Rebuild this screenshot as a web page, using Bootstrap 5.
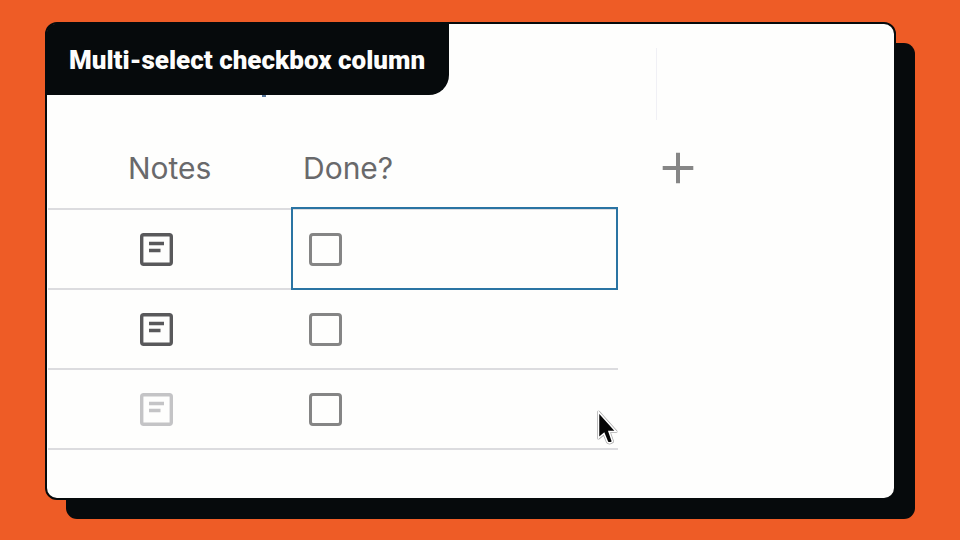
<!DOCTYPE html>
<html lang="en">
<head>
<meta charset="utf-8">
<meta name="viewport" content="width=device-width, initial-scale=1">
<title>Multi-select checkbox column</title>
<link href="https://cdn.jsdelivr.net/npm/bootstrap@5.3.0/dist/css/bootstrap.min.css" rel="stylesheet">
<style>
  body { background: #ee5c26; font-family: Inter, "Liberation Sans", sans-serif; padding: 22px 64px 40px 45px; }
  .demo-panel { background: #fefefd; border: 2px solid #060a0c; border-radius: 12px; box-shadow: 20px 20px 0 -1px #060a0c; }
  .demo-head { height: 104px; }
  .demo-title { background: #060a0c; color: #fdfdfc; font-family: Roboto, "Liberation Sans", sans-serif; font-size: 26px; line-height: 24px; font-weight: 900; padding: 24px 24px 23px 22px; border-radius: 8px 0 20px 0; }
  .demo-title::after { content: ""; position: absolute; left: 215px; top: 100%; width: 4px; height: 2px; background: #56769c; }
  .head-rule { width: 1px; height: 72px; margin: 24px 237px 0 auto; background: #f0f0f5; }
  .grid-table { width: 570px; margin-left: 1px; border-collapse: separate; border-spacing: 0; table-layout: fixed; }
  .grid-table th, .grid-table td { border-bottom: 2px solid #dcdcdf; padding: 0; vertical-align: middle; }
  .grid-table th { height: 82px; font-size: 30px; line-height: 36px; font-weight: 400; color: #69696b; }
  .grid-table td { height: 80px; }
  .col-notes { width: 243px; }
  .grid-table th.notes-cell { padding-left: 80px; }
  .grid-table td.notes-cell { padding-left: 92px; }
  .grid-table th.done-cell { padding-left: 12px; }
  .grid-table td.done-cell { padding-left: 18px; }
  .picked::after { content: ""; position: absolute; inset: -3px 0 -2px 0; border: 2px solid #2a74a3; pointer-events: none; }
  .note-btn { display: block; color: #59595b; background: none; border: 0; padding: 0; }
  .note-btn.empty { color: #c4c4c6; }
  .note-btn svg, .plus-btn svg { display: block; }
  .tick { appearance: none; display: block; width: 33px; height: 33px; margin: 0; border: 3px solid #858585; border-radius: 4px; background: #fefefd; }
  .tick:checked { background: #858585; }
  .plus-btn { color: #868686; background: none; border: 0; padding: 0; margin: 24px 0 0 44px; }
  .pointer { left: 550px; top: 386px; }
</style>
</head>
<body class="min-vh-100 d-flex">
<main class="demo-panel flex-fill d-flex flex-column position-relative">
  <header class="demo-head d-flex align-items-start">
    <h1 class="demo-title position-relative m-0 text-nowrap">Multi-select checkbox column</h1>
    <div class="head-rule"></div>
  </header>
  <div class="d-flex align-items-start">
    <table class="grid-table">
      <colgroup><col class="col-notes"><col></colgroup>
      <thead><tr><th scope="col" class="notes-cell">Notes</th><th scope="col" class="done-cell">Done?</th></tr></thead>
      <tbody>
        <tr>
          <td class="notes-cell"><button type="button" class="note-btn" aria-label="Open note 1"><svg width="33" height="33" viewBox="0 0 33 33" fill="none" stroke="currentColor" stroke-width="3.4"><rect x="1.7" y="1.7" width="29.6" height="29.6" rx="2"/><path d="M9 10.500H24M9 17.500H20.500"/></svg></button></td>
          <td class="done-cell position-relative picked"><input class="tick" type="checkbox" aria-label="Done, row 1"></td>
        </tr>
        <tr>
          <td class="notes-cell"><button type="button" class="note-btn" aria-label="Open note 2"><svg width="33" height="33" viewBox="0 0 33 33" fill="none" stroke="currentColor" stroke-width="3.4"><rect x="1.7" y="1.7" width="29.6" height="29.6" rx="2"/><path d="M9 10.500H24M9 17.500H20.500"/></svg></button></td>
          <td class="done-cell"><input class="tick" type="checkbox" aria-label="Done, row 2"></td>
        </tr>
        <tr>
          <td class="notes-cell"><button type="button" class="note-btn empty" aria-label="Add note 3"><svg width="33" height="33" viewBox="0 0 33 33" fill="none" stroke="currentColor" stroke-width="3.4"><rect x="1.7" y="1.7" width="29.6" height="29.6" rx="2"/><path d="M9 10.500H24M9 17.500H20.500"/></svg></button></td>
          <td class="done-cell"><input class="tick" type="checkbox" aria-label="Done, row 3"></td>
        </tr>
      </tbody>
    </table>
    <button type="button" class="plus-btn" aria-label="Add column"><svg width="32" height="32" viewBox="0 0 32 32" stroke="currentColor" stroke-width="4"><path d="M16 .7V31.300M.7 16H31.300"/></svg></button>
  </div>
  <svg class="pointer position-absolute" width="22" height="36" viewBox="0 0 22 36" aria-hidden="true"><path d="M1.500 2V28L7 23.500L10.500 32Q12.500 34 15.500 31.500L12 21.500H19Z" fill="#060606" stroke="#aaa" stroke-width="3" stroke-linejoin="round"/><path d="M1.500 2V28L7 23.500L10.500 32Q12.500 34 15.500 31.500L12 21.500H19Z" fill="#060606" stroke="#fff" stroke-width="1.500"/></svg>
</main>
<script src="https://cdn.jsdelivr.net/npm/bootstrap@5.3.0/dist/js/bootstrap.bundle.min.js"></script>
</body>
</html>
